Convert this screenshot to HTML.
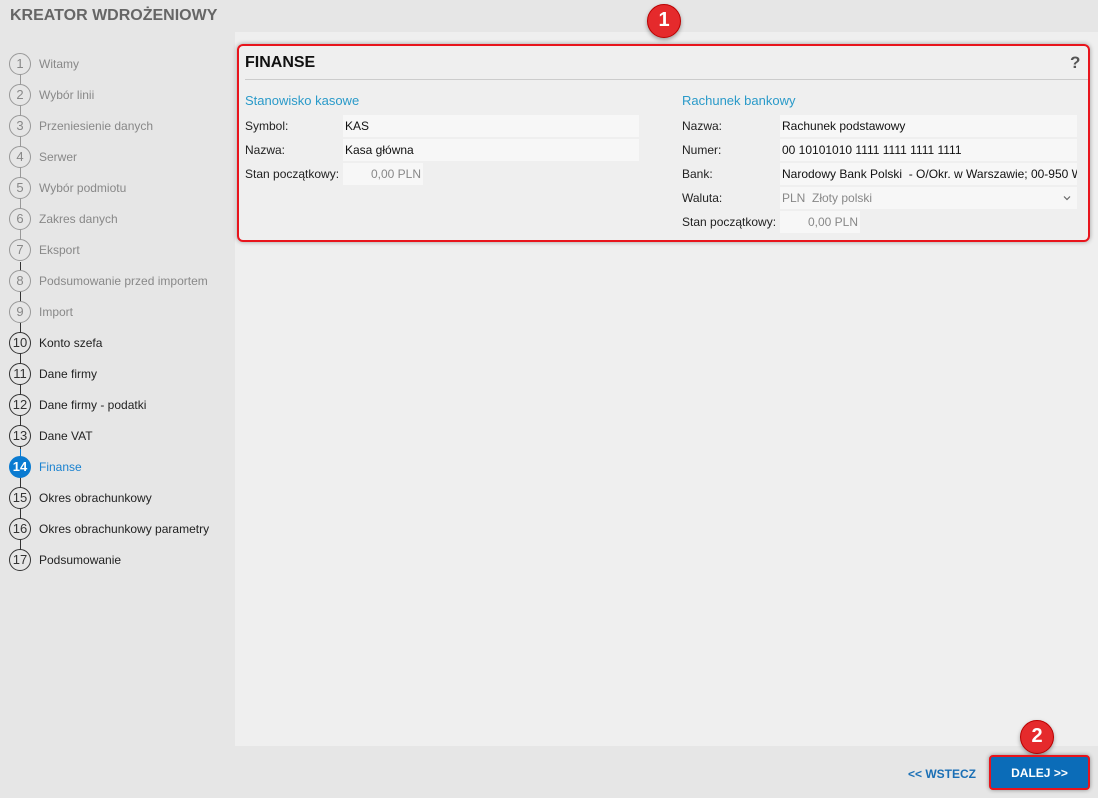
<!DOCTYPE html>
<html><head><meta charset="utf-8"><style>
*{margin:0;padding:0;box-sizing:border-box}
body{width:1098px;height:798px;background:#e6e6e6;font-family:"Liberation Sans","DejaVu Sans",sans-serif;font-size:12px;color:#222;position:relative;overflow:hidden}
.abs{position:absolute}
h1{position:absolute;left:10px;top:7px;font-size:16px;font-weight:bold;color:#666}
.step{position:absolute;left:9px;height:22px;width:230px}
.c{position:absolute;left:0;top:0;width:22px;height:22px;border-radius:50%;border:1.5px solid #333;text-align:center;line-height:19px;font-size:13px;background:#e6e6e6;color:#333}
.step span.t{position:absolute;left:30px;top:4px;font-size:12px;color:#222}
.g .c{border-color:#999;color:#888}
.g span.t{color:#888}
.ln{position:absolute;left:19.5px;width:1.5px;background:#333}
.cur .c{background:#0a7bd1;border-color:#0a7bd1;color:#fff;font-weight:bold}
.cur span.t{color:#1a82d0}
.main{position:absolute;left:235px;top:32px;width:863px;height:714px;background:#efefef}
.box{position:absolute;left:237px;top:44px;width:853px;height:198px;border:2px solid #e8141c;border-radius:6px;box-shadow:0 0 5px rgba(0,0,0,.35)}
.lbl{position:absolute;font-size:12px;color:#222}
.inp{position:absolute;height:22px;background:#f7f7f7;font-size:12px;line-height:22px;padding-left:2px;color:#111;white-space:nowrap;overflow:hidden}
.sec{position:absolute;color:#2a9ac9;font-size:13px}
.badge{position:absolute;width:34px;height:34px;border-radius:50%;background:#e52a2c;border:1.5px solid #b00;color:#fff;font-size:20px;font-weight:bold;text-align:center;line-height:31px;box-shadow:0 2px 4px rgba(0,0,0,.35)}
</style></head><body>
<h1>KREATOR WDROŻENIOWY</h1>
<div class="main"></div>

<div class="ln" style="top:74px;height:178px;background:#999"></div>
<div class="ln" style="top:262px;height:300px"></div>
<div class="ln" style="top:449px;height:28px;background:#0a7bd1"></div>

<div class="step g" style="top:53px"><div class="c">1</div><span class="t">Witamy</span></div>
<div class="step g" style="top:84px"><div class="c">2</div><span class="t">Wybór linii</span></div>
<div class="step g" style="top:115px"><div class="c">3</div><span class="t">Przeniesienie danych</span></div>
<div class="step g" style="top:146px"><div class="c">4</div><span class="t">Serwer</span></div>
<div class="step g" style="top:177px"><div class="c">5</div><span class="t">Wybór podmiotu</span></div>
<div class="step g" style="top:208px"><div class="c">6</div><span class="t">Zakres danych</span></div>
<div class="step g" style="top:239px"><div class="c">7</div><span class="t">Eksport</span></div>
<div class="step g" style="top:270px"><div class="c">8</div><span class="t">Podsumowanie przed importem</span></div>
<div class="step g" style="top:301px"><div class="c">9</div><span class="t">Import</span></div>
<div class="step" style="top:332px"><div class="c">10</div><span class="t">Konto szefa</span></div>
<div class="step" style="top:363px"><div class="c">11</div><span class="t">Dane firmy</span></div>
<div class="step" style="top:394px"><div class="c">12</div><span class="t">Dane firmy - podatki</span></div>
<div class="step" style="top:425px"><div class="c">13</div><span class="t">Dane VAT</span></div>
<div class="step cur" style="top:456px"><div class="c">14</div><span class="t">Finanse</span></div>
<div class="step" style="top:487px"><div class="c">15</div><span class="t">Okres obrachunkowy</span></div>
<div class="step" style="top:518px"><div class="c">16</div><span class="t">Okres obrachunkowy parametry</span></div>
<div class="step" style="top:549px"><div class="c">17</div><span class="t">Podsumowanie</span></div>

<div class="box"></div>
<div class="abs" style="left:245px;top:54px;font-size:16px;font-weight:bold;color:#111">FINANSE</div>
<div class="abs" style="left:1070px;top:53px;font-size:17px;font-weight:bold;color:#555">?</div>
<div class="abs" style="left:245px;top:79px;width:843px;height:1px;background:#ccc"></div>

<div class="sec" style="left:245px;top:93px">Stanowisko kasowe</div>
<div class="lbl" style="left:245px;top:119px">Symbol:</div><div class="inp" style="left:343px;top:115px;width:296px">KAS</div>
<div class="lbl" style="left:245px;top:143px">Nazwa:</div><div class="inp" style="left:343px;top:139px;width:296px">Kasa główna</div>
<div class="lbl" style="left:245px;top:167px">Stan początkowy:</div><div class="inp" style="left:343px;top:163px;width:80px;text-align:right;padding-right:2px;color:#888">0,00 PLN</div>

<div class="sec" style="left:682px;top:93px">Rachunek bankowy</div>
<div class="lbl" style="left:682px;top:119px">Nazwa:</div><div class="inp" style="left:780px;top:115px;width:297px">Rachunek podstawowy</div>
<div class="lbl" style="left:682px;top:143px">Numer:</div><div class="inp" style="left:780px;top:139px;width:297px">00 10101010 1111 1111 1111 1111</div>
<div class="lbl" style="left:682px;top:167px">Bank:</div><div class="inp" style="left:780px;top:163px;width:297px">Narodowy Bank Polski &nbsp;- O/Okr. w Warszawie; 00-950 W</div>
<div class="lbl" style="left:682px;top:191px">Waluta:</div><div class="inp" style="left:780px;top:187px;width:297px;color:#888">PLN &nbsp;Złoty polski<svg style="position:absolute;right:6px;top:8px" width="8" height="6" viewBox="0 0 8 6"><path d="M1 1.5L4 4.5L7 1.5" fill="none" stroke="#666" stroke-width="1.2"/></svg></div>
<div class="lbl" style="left:682px;top:215px">Stan początkowy:</div><div class="inp" style="left:780px;top:211px;width:80px;text-align:right;padding-right:2px;color:#888">0,00 PLN</div>

<div class="badge" style="left:647px;top:4px">1</div>
<div class="badge" style="left:1020px;top:720px">2</div>

<div class="abs" style="left:908px;top:767px;font-size:12px;font-weight:bold;color:#1a6fb5">&lt;&lt; WSTECZ</div>
<div class="abs" style="left:989px;top:755px;width:101px;height:35px;border:2px solid #e8141c;border-radius:4px;background:#0b6cb8;color:#fff;font-weight:bold;font-size:12px;text-align:center;line-height:33px;box-shadow:0 0 4px rgba(0,0,0,.4)">DALEJ &gt;&gt;</div>
</body></html>
